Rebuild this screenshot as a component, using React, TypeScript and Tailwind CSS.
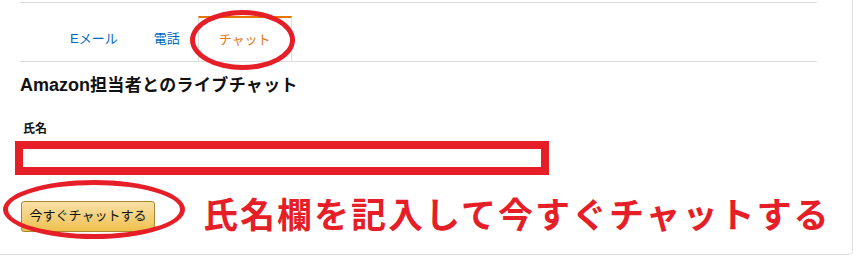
const font = { fontFamily: '"Liberation Sans", "Noto Sans CJK JP", sans-serif' };

function Tab({ label, active }: { label: string; active?: boolean }) {
  if (active) {
    return (
      <div className="flex h-[45px] items-center border-x border-t-2 border-x-[#ddd] border-t-[#e77600] bg-white px-5 text-[13px] text-[#e47911]">
        {label}
      </div>
    );
  }
  return (
    <div className="flex h-[45px] items-center px-[18px] text-[13px] text-[#0066c0]">
      {label}
    </div>
  );
}

export default function App() {
  return (
    <div
      className="relative h-[255px] w-[853px] overflow-hidden rounded-br-[5px] border-r border-b border-[#ddd] bg-white text-[#111]"
      style={font}
    >
      <div className="pl-5 pr-[35px] pt-[2px]">
        <div className="border-t border-[#ddd]">
          <div className="flex border-b border-[#ddd] pl-8 pt-[13px]">
            <Tab label="Eメール" />
            <Tab label="電話" />
            <Tab label="チャット" active />
          </div>
        </div>

        <h1 className="mt-[11px] flex items-baseline text-[18px] leading-6 font-bold">
          <span>Amazon</span>
          <span className="text-[17px] tracking-[0.35px]">担当者とのライブチャット</span>
        </h1>

        <label className="mt-[23px] block pl-[3px] text-[12px] leading-4 font-bold">氏名</label>
        <div className="-ml-[5px] mt-1 h-[34px] w-[534px] border-8 border-[#e61e28] bg-white" />

        <div className="mt-[21px] flex items-center">
          <button className="ml-px flex h-[31px] w-[134px] shrink-0 items-center justify-center rounded-[3px] border border-[#a88734] bg-gradient-to-b from-[#f7dfa5] to-[#f0c14b] text-[13px] text-[#111]">
            今すぐチャットする
          </button>
          <span className="ml-[48px] shrink-0 whitespace-nowrap text-[35px] leading-[40px] font-bold tracking-[2px] text-[#e61e28]">
            氏名欄を記入して今すぐチャットする
          </span>
        </div>
      </div>

      {/* annotation rings */}
      <div className="absolute left-[190px] top-[10px] h-[60px] w-[105px] rounded-[50%] border-[5px] border-[#e61e28]" />
      <div className="absolute left-[3px] top-[180px] h-[59px] w-[182px] rounded-[50%] border-[5px] border-[#e61e28]" />
    </div>
  );
}
